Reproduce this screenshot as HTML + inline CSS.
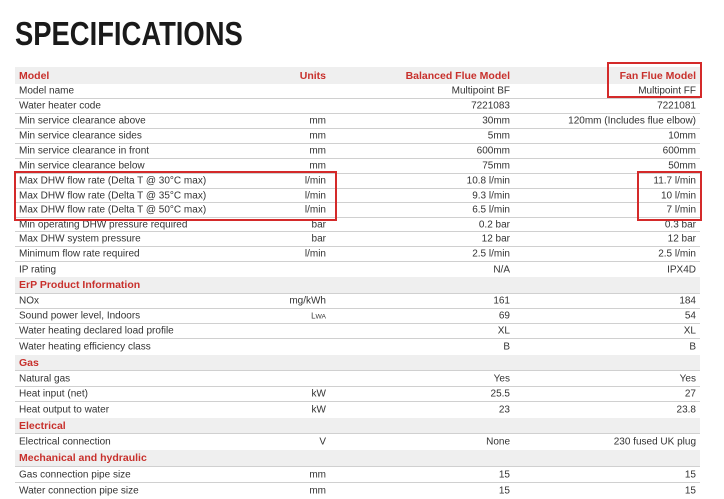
<!DOCTYPE html>
<html><head><meta charset="utf-8"><style>
*{margin:0;padding:0;box-sizing:border-box}
body{width:724px;height:496px;background:#fff;position:relative;overflow:hidden;font-family:"Liberation Sans",sans-serif;color:#333}
h1{position:absolute;left:15px;top:14px;font-family:"Liberation Sans",sans-serif;font-weight:bold;font-size:33px;color:#1a1a1a;transform-origin:0 0;transform:scaleX(0.83);white-space:nowrap;line-height:40px}
.r{position:absolute;left:15px;width:685px;border-bottom:1px solid #d0d0d0;font-size:10px}
.r span{position:absolute;top:50%;transform:translateY(-50%);white-space:nowrap}
.l{left:4px}
.u{right:374px}
.b{right:190px}
.f{right:4px}
.s{background:#efefef;color:#c8302c;font-weight:bold;font-size:10.5px}
.h{background:#efefef;color:#c8302c;font-weight:bold;font-size:10.5px;border-bottom:none}
.box{position:absolute;border:2px solid #d42a2a}
</style></head><body>
<h1>SPECIFICATIONS</h1>

<div class="r h" style="top:67px;height:17px"><span class="l">Model</span><span class="u">Units</span><span class="b">Balanced Flue Model</span><span class="f">Fan Flue Model</span></div>
<div class="r" style="top:84px;height:15px"><span class="l">Model name</span><span class="b">Multipoint BF</span><span class="f">Multipoint FF</span></div>
<div class="r" style="top:99px;height:15px"><span class="l">Water heater code</span><span class="b">7221083</span><span class="f">7221081</span></div>
<div class="r" style="top:114px;height:15px"><span class="l">Min service clearance above</span><span class="u">mm</span><span class="b">30mm</span><span class="f">120mm (Includes flue elbow)</span></div>
<div class="r" style="top:129px;height:15px"><span class="l">Min service clearance sides</span><span class="u">mm</span><span class="b">5mm</span><span class="f">10mm</span></div>
<div class="r" style="top:144px;height:15px"><span class="l">Min service clearance in front</span><span class="u">mm</span><span class="b">600mm</span><span class="f">600mm</span></div>
<div class="r" style="top:159px;height:15px"><span class="l">Min service clearance below</span><span class="u">mm</span><span class="b">75mm</span><span class="f">50mm</span></div>
<div class="r" style="top:174px;height:15px"><span class="l">Max DHW flow rate (Delta T @ 30°C max)</span><span class="u">l/min</span><span class="b">10.8 l/min</span><span class="f">11.7 l/min</span></div>
<div class="r" style="top:189px;height:14px"><span class="l">Max DHW flow rate (Delta T @ 35°C max)</span><span class="u">l/min</span><span class="b">9.3 l/min</span><span class="f">10 l/min</span></div>
<div class="r" style="top:203px;height:15px"><span class="l">Max DHW flow rate (Delta T @ 50°C max)</span><span class="u">l/min</span><span class="b">6.5 l/min</span><span class="f">7 l/min</span></div>
<div class="r" style="top:218px;height:14px"><span class="l">Min operating DHW pressure required</span><span class="u">bar</span><span class="b">0.2 bar</span><span class="f">0.3 bar</span></div>
<div class="r" style="top:232px;height:15px"><span class="l">Max DHW system pressure</span><span class="u">bar</span><span class="b">12 bar</span><span class="f">12 bar</span></div>
<div class="r" style="top:247px;height:15px"><span class="l">Minimum flow rate required</span><span class="u">l/min</span><span class="b">2.5 l/min</span><span class="f">2.5 l/min</span></div>
<div class="r" style="top:262px;height:15px;border-bottom:none"><span class="l">IP rating</span><span class="b">N/A</span><span class="f">IPX4D</span></div>
<div class="r s" style="top:277px;height:17px"><span class="l">ErP Product Information</span></div>
<div class="r" style="top:294px;height:15px"><span class="l">NOx</span><span class="u">mg/kWh</span><span class="b">161</span><span class="f">184</span></div>
<div class="r" style="top:309px;height:15px"><span class="l">Sound power level, Indoors</span><span class="u" style="font-size:8px">L<small>WA</small></span><span class="b">69</span><span class="f">54</span></div>
<div class="r" style="top:324px;height:15px"><span class="l">Water heating declared load profile</span><span class="b">XL</span><span class="f">XL</span></div>
<div class="r" style="top:339px;height:16px;border-bottom:none"><span class="l">Water heating efficiency class</span><span class="b">B</span><span class="f">B</span></div>
<div class="r s" style="top:355px;height:16px"><span class="l">Gas</span></div>
<div class="r" style="top:371px;height:16px"><span class="l">Natural gas</span><span class="b">Yes</span><span class="f">Yes</span></div>
<div class="r" style="top:387px;height:15px"><span class="l">Heat input (net)</span><span class="u">kW</span><span class="b">25.5</span><span class="f">27</span></div>
<div class="r" style="top:402px;height:16px;border-bottom:none"><span class="l">Heat output to water</span><span class="u">kW</span><span class="b">23</span><span class="f">23.8</span></div>
<div class="r s" style="top:418px;height:16px"><span class="l">Electrical</span></div>
<div class="r" style="top:434px;height:16px;border-bottom:none"><span class="l">Electrical connection</span><span class="u">V</span><span class="b">None</span><span class="f">230 fused UK plug</span></div>
<div class="r s" style="top:450px;height:17px"><span class="l">Mechanical and hydraulic</span></div>
<div class="r" style="top:467px;height:16px"><span class="l">Gas connection pipe size</span><span class="u">mm</span><span class="b">15</span><span class="f">15</span></div>
<div class="r" style="top:483px;height:16px;border-bottom:none"><span class="l">Water connection pipe size</span><span class="u">mm</span><span class="b">15</span><span class="f">15</span></div>

<div class="box" style="left:607px;top:62px;width:95px;height:36px"></div>
<div class="box" style="left:14px;top:171px;width:323px;height:50px"></div>
<div class="box" style="left:637px;top:171px;width:65px;height:50px"></div>
</body></html>
